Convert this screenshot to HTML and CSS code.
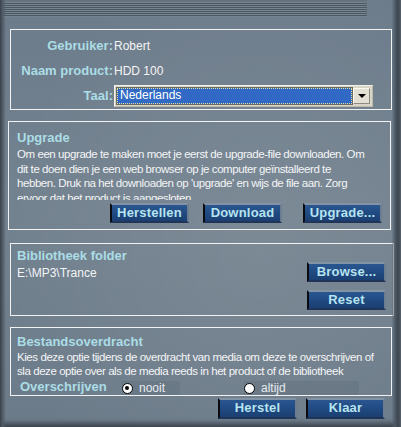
FILE: index.html
```html
<!DOCTYPE html>
<html>
<head>
<meta charset="utf-8">
<link rel="stylesheet" href="styles.css">
</head>
<body>
<div class="window">
  <div class="stripes"></div>

  <div class="panel p1">
    <div class="form">
      <div class="lbl">Gebruiker:</div><div class="val">Robert</div>
      <div class="lbl">Naam product:</div><div class="val">HDD 100</div>
      <div class="lbl">Taal:</div>
      <div class="val">
        <div class="select">
          <div class="sel-text">Nederlands</div>
          <div class="sel-btn"><span class="arrow"></span></div>
        </div>
      </div>
    </div>
  </div>

  <div class="panel p2">
    <div class="title">Upgrade</div>
    <div class="text t2">Om een upgrade te maken moet je eerst de upgrade-file downloaden. Om<br>dit te doen dien je een web browser op je computer geïnstalleerd te<br>hebben. Druk na het downloaden op 'upgrade' en wijs de file aan. Zorg<br>ervoor dat het product is aangesloten.</div>
    <div class="btnrow">
      <div class="btn b1">Herstellen</div>
      <div class="btn b2">Download</div>
      <div class="btn b3">Upgrade...</div>
    </div>
  </div>

  <div class="panel p3">
    <div class="col-left">
      <div class="title">Bibliotheek folder</div>
      <div class="path">E:\MP3\Trance</div>
    </div>
    <div class="col-right">
      <div class="btn">Browse...</div>
      <div class="btn">Reset</div>
    </div>
  </div>

  <div class="panel p4">
    <div class="title">Bestandsoverdracht</div>
    <div class="text t4">Kies deze optie tijdens de overdracht van media om deze te overschrijven of<br>sla deze optie over als de media reeds in het product of de bibliotheek</div>
    <div class="radiorow">
      <div class="rlabel">Overschrijven</div>
      <div class="opt o1"><span class="radio checked"></span><span>nooit</span></div>
      <div class="opt o2"><span class="radio"></span><span>altijd</span></div>
    </div>
  </div>

  <div class="footer">
    <div class="btn">Herstel</div>
    <div class="btn">Klaar</div>
  </div>
</div>
</body>
</html>
```

FILE: styles.css
```css
* { box-sizing: border-box; }
html, body { margin: 0; padding: 0; }
body {
  font-family: "Liberation Sans", Arial, sans-serif;
  font-size: 12px;
  color: #f2f4f6;
  background: #6f7e8d;
}
.window {
  position: relative;
  width: 401px;
  height: 427px;
  overflow: hidden;
  display: flex;
  flex-direction: column;
  background:
    radial-gradient(ellipse 260px 300px at 260px 250px, rgba(255,255,255,0.07), rgba(255,255,255,0) 100%),
    linear-gradient(#6d7c8b, #73828f 50%, #6c7b89);
  box-shadow: inset 0 -7px 5px -3px rgba(20,26,32,0.55);
}
.window::before {
  content: "";
  position: absolute;
  left: 0; top: 0; bottom: 0;
  width: 6px;
  background: linear-gradient(to right, #39414a, #4f5a66 40%, rgba(111,126,141,0));
}
.window::after {
  content: "";
  position: absolute;
  right: 0; top: 0; bottom: 0;
  width: 9px;
  background: linear-gradient(to right, rgba(90,104,118,0.2), #4a5560 40%, #3c4650 70%, #56616c);
}
.stripes {
  flex: none;
  width: 367px;
  height: 17px;
  background: repeating-linear-gradient(to bottom, #76848f 0 1px, #4c5764 1px 2px);
  border-top: 2px solid #66737f;
}
.panel {
  flex: none;
  border: 1px solid #f2f2f2;
}
.p1 { margin: 12px 0 0 10px; width: 382px; height: 81px; padding-top: 3px; }
.p2 { margin: 11px 0 0 8px; width: 383px; height: 109px; padding: 9px 0 0 8px; }
.p3 { margin: 13px 0 0 10px; width: 384px; height: 73px; padding: 5px 7px 0 6px; display: flex; justify-content: space-between; }
.p4 { margin: 11px 0 0 10px; width: 382px; height: 69px; padding: 7px 0 0 6px; }

.form {
  display: grid;
  grid-template-columns: 102px 1fr;
  grid-auto-rows: 25px;
  column-gap: 1px;
  align-items: center;
}
.lbl {
  text-align: right;
  font-weight: bold;
  font-size: 13px;
  color: #abdde6;
}
.val { font-size: 12px; color: #f4f4f4; }
.select {
  width: 259px;
  height: 22px;
  margin-top: 1px;
  display: flex;
  align-items: stretch;
  background: #d9d5c7;
  border: 1px solid #f4f1e8;
  border-right-color: #bdb9ab;
  border-bottom-color: #bdb9ab;
  padding: 2px;
}
.sel-text {
  flex: 1;
  background: #316ac5;
  color: #fff;
  border: 1px dotted #e8e0a0;
  outline: 1px solid #6b6a60;
  line-height: 13px;
  padding-left: 2px;
  font-size: 12px;
  margin-right: 1px;
}
.sel-btn {
  width: 17px;
  background: #e4e0d4;
  border: 1px solid #fbf9f2;
  border-right-color: #8f8b80;
  border-bottom-color: #8f8b80;
  display: flex;
  align-items: center;
  justify-content: center;
}
.arrow {
  width: 0; height: 0;
  border-left: 4px solid transparent;
  border-right: 4px solid transparent;
  border-top: 4px solid #000;
}

.title {
  font-weight: bold;
  font-size: 13px;
  line-height: 14px;
  color: #abdde6;
}
.text {
  font-size: 11.5px;
  letter-spacing: -0.43px;
  line-height: 14.5px;
  white-space: nowrap;
  overflow: hidden;
  color: #f4f5f6;
}
.t2 { margin-top: 2px; height: 53px; }
.t4 { margin-top: 1px; height: 29px; line-height: 14px; }

.btn {
  flex: none;
  width: 79px;
  height: 20px;
  border-left: 2px solid #0a0c10;
  border-top: 2px solid #8293a6;
  border-right: 2px solid #6c7d90;
  border-bottom: 2px solid #203458;
  background: linear-gradient(#2a5690, #1f487f 60%, #1b3f72);
  color: #b6e4f0;
  font-weight: bold;
  font-size: 13px;
  line-height: 16px;
  text-align: center;
  letter-spacing: 0.2px;
}
.btnrow { display: flex; margin-top: 3px; }
.b1 { margin-left: 93px; }
.b2 { margin-left: 14px; }
.b3 { margin-left: 21px; }

.path { margin-top: 3px; line-height: 14px; font-size: 12px; }
.col-right {
  display: flex;
  flex-direction: column;
  gap: 8px;
  margin-top: 13px;
}
.col-right .btn { height: 20px; }

.radiorow {
  display: flex;
  align-items: center;
  height: 15px;
}
.rlabel {
  width: 102px;
  margin-left: 3px;
  font-weight: bold;
  font-size: 13px;
  color: #abdde6;
}
.opt {
  display: flex;
  align-items: center;
  gap: 6px;
  height: 14px;
  margin-top: 3px;
  background: rgba(80,95,110,0.22);
  color: #e6eaee;
  font-size: 12px;
}
.o1 { width: 58px; }
.o2 { width: 115px; margin-left: 64px; }
.radio {
  width: 11px; height: 11px;
  border-radius: 50%;
  background: #fff;
  border: 1px solid #000;
  position: relative;
}
.radio.checked { border-width: 1.5px; }
.radio.checked::after {
  content: "";
  position: absolute;
  left: 2px; top: 2px;
  width: 4px; height: 4px;
  border-radius: 50%;
  background: #000;
}

.footer {
  display: flex;
  gap: 9px;
  margin: 2px 0 0 218px;
}
.footer .btn { height: 21px; }
```
